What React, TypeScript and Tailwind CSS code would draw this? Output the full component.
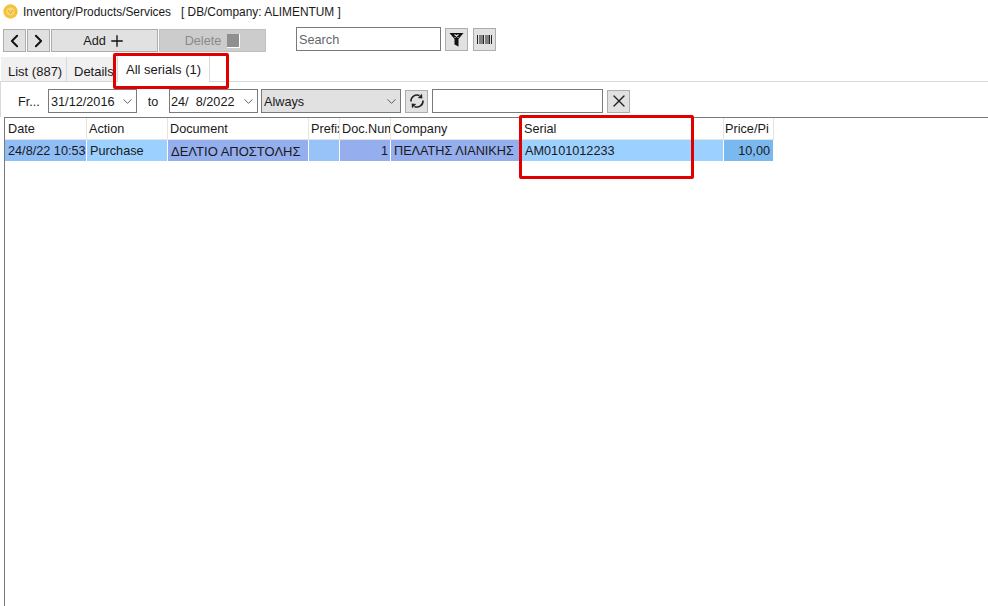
import { ChevronDown, ChevronLeft, ChevronRight, Plus, X } from "lucide-react";

const columns = [
  { title: "Date", width: "w-[82px]", value: "24/8/22 10:53", cell: "bg-[#8fbdf6]", pad: "pl-[3px]", head: "pl-[3px]" },
  { title: "Action", width: "w-[81px]", value: "Purchase", cell: "bg-[#9bd0ff]", pad: "pl-[3px]", head: "pl-[2px]" },
  { title: "Document", width: "w-[141px]", value: "ΔΕΛΤΙΟ ΑΠΟΣΤΟΛΗΣ", cell: "bg-[#94aeee] text-[13px] leading-[17px]", pad: "pl-[3px]", head: "pl-[2px]" },
  { title: "Prefix", width: "w-[31px]", value: "", cell: "bg-[#97c3f9]", pad: "pl-[2px]", head: "pl-[2px]" },
  { title: "Doc.Num", width: "w-[51px]", value: "1", cell: "bg-[#94aeee] justify-end", pad: "pr-[2px]", head: "pl-[2px]" },
  { title: "Company", width: "w-[130px]", value: "ΠΕΛΑΤΗΣ ΛΙΑΝΙΚΗΣ", cell: "bg-[#94aeee]", pad: "pl-[3px]", head: "pl-[2px]" },
  { title: "Serial", width: "w-[203px]", value: "AM0101012233", cell: "bg-[#9bd0ff]", pad: "pl-[4px]", head: "pl-[3px]" },
  { title: "Price/Pi", width: "w-[50px]", value: "10,00", cell: "bg-[#7ab9f0] justify-end", pad: "pr-[3px]", head: "pl-[1px]" },
];

function Combo({ width, text, bg, pad }: { width: string; text: string; bg: string; pad: string }) {
  return (
    <div className={`${width} ${bg} ${pad} h-[24px] border border-[#7a7a7a] flex items-center justify-between pr-[1px]`}>
      <span className="whitespace-pre pt-[4px]">{text}</span>
      <ChevronDown size={15} strokeWidth={1.2} className="text-[#333]" />
    </div>
  );
}

export default function App() {
  return (
    <div className="relative w-[988px] h-[606px] overflow-hidden bg-white text-[12.7px] text-[#1a1a1a] font-['Liberation_Sans',sans-serif]">
      {/* title bar */}
      <div className="h-[27px] flex items-center pl-[3px] pb-[1px]">
        <svg width="15" height="15" viewBox="0 0 15 15" className="mr-[5px] -mt-[3px]">
          <circle cx="7.5" cy="7.5" r="7.2" fill="#f4c23c" />
          <circle cx="7.5" cy="7.5" r="4" fill="#f8d675" />
          <path d="M5 6 L7.5 9.5 L10 6" stroke="#e0a52a" strokeWidth="1" fill="none" />
        </svg>
        <span className="text-[11.9px] whitespace-pre">Inventory/Products/Services   [ DB/Company: ALIMENTUM ]</span>
      </div>

      {/* toolbar */}
      <div className="h-[26px] flex items-start">
        <div className="flex gap-[1px] ml-[3px]">
          <button className="w-[23px] h-[23px] mt-[2px] bg-[#e1e1e1] border border-[#adadad] flex items-center justify-center">
            <ChevronLeft size={24} strokeWidth={2.2} className="text-[#111]" />
          </button>
          <button className="w-[23px] h-[23px] mt-[2px] bg-[#e1e1e1] border border-[#adadad] flex items-center justify-center">
            <ChevronRight size={24} strokeWidth={2.2} className="text-[#111]" />
          </button>
        </div>
        <button className="ml-[1px] mt-[2px] w-[107px] h-[23px] bg-[#e1e1e1] border border-[#adadad] flex items-center justify-center gap-[2px]">
          <span className="pt-[3px]">Add</span> <Plus size={18} strokeWidth={1.8} className="text-[#111]" />
        </button>
        <button className="ml-[1px] mt-[2px] w-[107px] h-[23px] bg-[#cccccc] border border-[#bfbfbf] flex items-center justify-center gap-[6px] text-[#8a8a8a]">
          <span className="pt-[3px]">Delete</span>
          <span className="w-[13px] h-[14px] bg-[#8f8f8f] border-r border-b border-white" />
        </button>
        <div className="ml-[30px] w-[145px] h-[24px] border border-[#7a7a7a] flex items-center pl-[2px] pt-[4px] text-[#666]">Search</div>
        <button className="ml-[4px] mt-[1px] w-[23px] h-[23px] bg-[#e1e1e1] border border-[#adadad] flex items-center justify-center">
          <svg width="15" height="15" viewBox="0 0 15 15">
            <path d="M0.5 1 H14.5 L9.5 7 V14.5 L5.5 12.5 V7 Z" fill="#111" />
            <path d="M5.5 2.5 L9.5 5.5 M9.5 2.5 L5.5 5.5" stroke="#e1e1e1" strokeWidth="1.1" />
          </svg>
        </button>
        <button className="ml-[5px] mt-[1px] w-[23px] h-[23px] bg-[#e1e1e1] border border-[#adadad] flex items-center justify-center">
          <svg width="15" height="9" viewBox="0 0 15 9">
            <path d="M0.5 0V9M3 0V9M5 0V9M6.5 0V9M9 0V9M11 0V9M12.5 0V9M14.5 0V9" stroke="#222" strokeWidth="1" />
          </svg>
        </button>
      </div>

      {/* tabs */}
      <div className="h-[29px] flex items-end border-b border-[#d9d9d9] pl-[1px] text-[13px]">
        <div className="h-[24px] w-[66px] pl-[7px] bg-[#f0f0f0] border-r border-[#d9d9d9] flex items-center pt-[5px] whitespace-nowrap">List (887)</div>
        <div className="h-[24px] w-[50px] pl-[7px] bg-[#f0f0f0] flex items-center pt-[5px]">Details</div>
        <div className="h-[28px] w-[93px] -mb-[1px] pl-[8px] pt-[2px] bg-white border border-b-0 border-[#d9d9d9] flex items-center whitespace-nowrap">All serials (1)</div>
      </div>

      {/* date filter */}
      <div className="h-[35px] flex items-center pl-[17px] pt-[3px] border-l border-[#d9d9d9]">
        <span className="w-[30px] pt-[4px]">Fr...</span>
        <Combo width="w-[89px]" text="31/12/2016" bg="bg-white" pad="pl-[2px]" />
        <span className="w-[32px] text-center pt-[4px]">to</span>
        <Combo width="w-[89px]" text="24/  8/2022" bg="bg-white" pad="pl-[1px]" />
        <div className="ml-[3px]">
          <Combo width="w-[140px]" text="Always" bg="bg-[#e1e1e1]" pad="pl-[2px]" />
        </div>
        <button className="ml-[4px] w-[23px] h-[23px] bg-[#e1e1e1] border border-[#adadad] flex items-center justify-center">
          <svg width="16" height="16" viewBox="0 0 16 16" fill="none" stroke="#222" strokeWidth="1.6">
            <path d="M2 8.5 A6 6 0 0 1 10.5 2.6" />
            <path d="M14 7.5 A6 6 0 0 1 5.5 13.4" />
            <path d="M13 0.8 L13.4 5.6 L8.8 5 Z" fill="#222" stroke="none" />
            <path d="M3 15.2 L2.6 10.4 L7.2 11 Z" fill="#222" stroke="none" />
          </svg>
        </button>
        <div className="ml-[4px] w-[171px] h-[24px] bg-white border border-[#7a7a7a]" />
        <button className="ml-[4px] w-[23px] h-[23px] bg-[#e1e1e1] border border-[#adadad] flex items-center justify-center">
          <X size={20} strokeWidth={1.6} className="text-[#222]" />
        </button>
      </div>

      {/* serials grid */}
      <div className="h-[489px] ml-[4px] border-l border-t border-[#7a7a7a]">
        <div className="flex h-[22px]">
          {columns.map((c) => (
            <div key={c.title} className={`${c.width} ${c.head} pt-[2px] shrink-0 overflow-hidden whitespace-nowrap border-r border-b border-[#e4e4e4] flex items-center`}>
              {c.title}
            </div>
          ))}
        </div>
        <div className="flex h-[21px]">
          {columns.map((c) => (
            <div key={c.title} className={`${c.width} ${c.cell} ${c.pad} pt-[2px] shrink-0 overflow-hidden whitespace-nowrap border-r border-white flex items-center`}>
              {c.value}
            </div>
          ))}
        </div>
      </div>

      {/* red callouts */}
      <div className="absolute left-[113px] top-[53px] w-[116px] h-[36px] border-[3px] border-[#e00000] rounded-[2px]" />
      <div className="absolute left-[519px] top-[115px] w-[175px] h-[64px] border-[3px] border-[#e00000] rounded-[2px]" />
    </div>
  );
}
